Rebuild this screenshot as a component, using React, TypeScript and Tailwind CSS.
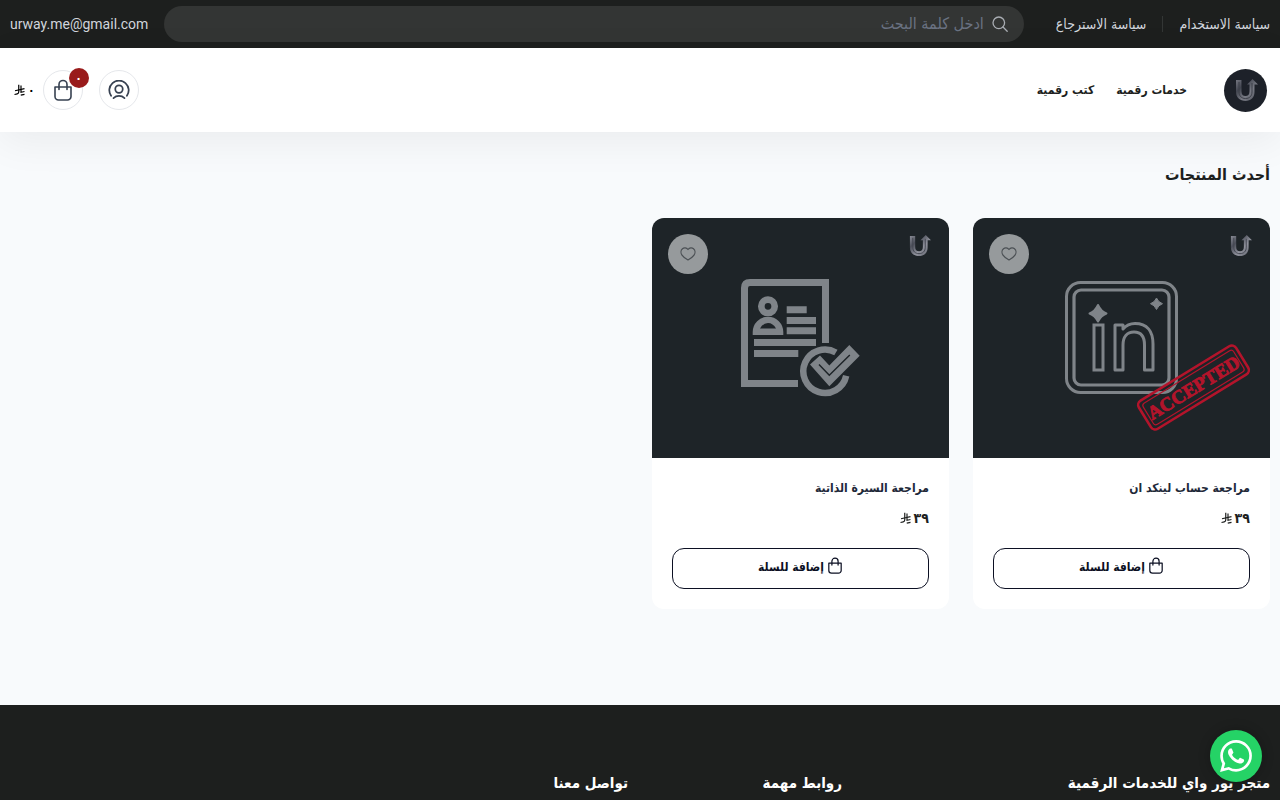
import { useState } from "react";

const menuLinks = ["خدمات رقمية", "كتب رقمية"];
const footerColumns = ["روابط مهمة", "تواصل معنا"];

const UMark = ({ className }: { className?: string }) => (
  <svg viewBox="0 0 24 24" className={className} fill="none" aria-hidden="true">
    <defs>
      <linearGradient id="umark" x1="0" y1="0" x2="1" y2="1">
        <stop offset="0" stopColor="#8f919b" />
        <stop offset="0.3" stopColor="#4c4f5a" />
        <stop offset="0.6" stopColor="#90929c" />
        <stop offset="1" stopColor="#5c5f69" />
      </linearGradient>
    </defs>
    <path
      d="M2 2h5.500v11.500c0 3 1.500 4.500 4 4.500s4-1.500 4-4.500V6.500H13L18.500 1l5.500 5.500h-3.500V14c0 5.500-3.500 9-9 9s-9.500-3.500-9.500-9z"
      fill="url(#umark)"
    />
    <path d="M5 4v10c0 4 2.500 6.500 6.500 6.500s6.500-2.500 6.500-6.500V5" stroke="#434650" strokeWidth="1" />
  </svg>
);

const Bag = ({ className }: { className?: string }) => (
  <svg viewBox="0 0 20 22" className={className} fill="none" stroke="currentColor" strokeWidth="1.600" strokeLinecap="round" aria-hidden="true">
    <path d="M2 8h16v9.500a3.500 3.500 0 0 1-3.500 3.500h-9A3.500 3.500 0 0 1 2 17.500z" strokeLinejoin="round" />
    <path d="M6 10.500V5.500a4 4 0 0 1 8 0v5" />
  </svg>
);

const Riyal = ({ className }: { className?: string }) => (
  <svg viewBox="0 0 22 24" className={className} fill="none" stroke="currentColor" strokeWidth="2.400" aria-label="ريال" role="img">
    <path d="M1 21l5.500-1.300c2-.5 3-1.700 3-3.700V1.500" />
    <path d="M14 3v13.500l7-1.500" />
    <path d="M2 13.500l19-4.300M13.500 22.300l7.500-1.700" />
  </svg>
);

const LinkedinArt = () => (
  <svg viewBox="0 0 297 240" className="h-full w-full" fill="none" stroke="#7f8489" aria-hidden="true">
    <rect x="93.500" y="64.500" width="110" height="110" rx="14" strokeWidth="3" />
    <rect x="101" y="72" width="95" height="95" rx="7" strokeWidth="3.200" />
    <rect x="121" y="107" width="9" height="45" strokeWidth="3" />
    <path
      d="M142 107h8v4c3-3.500 7-5.500 12-5.500 12 0 18 7.500 18 20.500v26h-8.500v-25c0-9-3.500-13-10.500-13s-11 5-11 13v25h-8z"
      strokeWidth="3"
      strokeLinejoin="round"
    />
    <g fill="#7f8489" stroke="#7f8489" strokeLinejoin="round">
      <path d="M125 87q3 6.500 8.500 8.500-5.500 2-8.500 8-3-6-8.500-8 5.500-2 8.500-8.500z" strokeWidth="2" />
      <path d="M183.500 80q1.800 4.300 6 5.700-4.200 1.500-6 5.800-1.800-4.300-6-5.800 4.200-1.400 6-5.700z" strokeWidth="1" />
    </g>
    <g transform="translate(220.500 169.500) rotate(-31.500)" stroke="#b3142b">
      <rect x="-57" y="-16.500" width="114" height="33" rx="5" strokeWidth="2.600" />
      <rect x="-53" y="-12.500" width="106" height="25" rx="3" strokeWidth="1.200" />
      <text x="0" y="6.500" textAnchor="middle" fill="#b3142b" strokeWidth="0.900" fontSize="19" className="font-['Liberation_Serif',serif] font-bold">
        ACCEPTED
      </text>
    </g>
  </svg>
);

const ResumeArt = () => (
  <svg viewBox="0 0 297 240" className="h-full w-full" fill="none" stroke="#7f8489" aria-hidden="true">
    <path d="M146 165.500H92.500V70q0-5.500 5.500-5.500h75.500V125" strokeWidth="7" />
    <circle cx="116" cy="88.300" r="6.700" strokeWidth="6.700" />
    <path
      d="M100.700 117v-3a15.300 15.300 0 0 1 30.600 0v3zM108 110.500h16q-3-5.500-8-5.500t-8 5.500z"
      fill="#7f8489"
      fillRule="evenodd"
      stroke="none"
    />
    <path d="M134.700 91.700h20M134.700 102.500h29.300M134.700 112.800h29.300M102 124.500h62M102 135.500h44.300" strokeWidth="7" />
    <path d="M183.900 134.500A21.700 21.700 0 1 0 194.200 157.800" strokeWidth="6.500" />
    <path d="M158 146.500l10-9 9.300 10L197.300 127l10.400 10.700-30.400 30.600z" fill="#7f8489" stroke="none" />
    <path d="M167 146.500l10.300 10.800 20.500-20.300" stroke="#1e2428" strokeWidth="1.500" />
  </svg>
);

const products = [
  { id: 1, title: "مراجعة حساب لينكد ان", price: "٣٩", art: <LinkedinArt /> },
  { id: 2, title: "مراجعة السيرة الذاتية", price: "٣٩", art: <ResumeArt /> },
];

const TopBar = () => {
  const [query, setQuery] = useState("");

  return (
    <div className="flex h-12 items-center bg-[#1d1f1e] px-2.5 text-sm text-gray-300">
      <a href="#terms">سياسة الاستخدام</a>
      <span className="mx-4 h-4 w-px bg-[#333635]" />
      <a href="#refund">سياسة الاسترجاع</a>
      <label className="mx-4 ms-8 flex h-9 flex-1 items-center gap-2 rounded-full bg-[#333534] px-4">
        <svg viewBox="0 0 16 16" className="h-4 w-4" fill="none" stroke="#a9adb3" strokeWidth="1.300" strokeLinecap="round" aria-hidden="true">
          <circle cx="6.800" cy="6.800" r="5.800" />
          <path d="M11 11l4.200 4.200" />
        </svg>
        <input
          type="search"
          aria-label="بحث"
          placeholder="ادخل كلمة البحث"
          value={query}
          onChange={(e) => setQuery(e.target.value)}
          className="min-w-0 flex-1 bg-transparent text-base placeholder:text-gray-500 focus:outline-none"
        />
      </label>
      <a href="mailto:urway.me@gmail.com" dir="ltr" className="font-[Roboto,sans-serif]">
        urway.me@gmail.com
      </a>
    </div>
  );
};

const Header = () => (
  <header className="flex h-[84px] items-center bg-white px-2.5 shadow-[0_10px_40px_rgba(0,0,0,0.06)]">
    <a href="#home" aria-label="الرئيسية" className="mx-[3px] flex h-[43px] w-[43px] items-center justify-center rounded-full bg-[#1d2129]">
      <UMark className="h-6 w-6 opacity-80" />
    </a>
    <nav className="ms-[34px] flex flex-1 gap-[22px] text-xs font-bold text-[#1d1f1e]">
      {menuLinks.map((link) => (
        <a key={link} href="#category">
          {link}
        </a>
      ))}
    </nav>
    <button aria-label="حسابي" className="flex h-10 w-10 items-center justify-center rounded-full border border-gray-200 text-[#374151]">
      <svg viewBox="0 0 20 18" className="h-5 w-[22px]" fill="none" stroke="currentColor" strokeWidth="1.600" strokeLinecap="round" aria-hidden="true">
        <path d="M2.800 14.300A8.800 8.800 0 1 1 17.200 14.300" />
        <circle cx="10" cy="8.200" r="3.400" />
        <path d="M5 16.300c1.300-1.200 3-1.900 5-1.900s3.700.7 5 1.900" />
      </svg>
    </button>
    <button aria-label="السلة" className="ms-4 flex items-center gap-2">
      <span className="relative flex h-10 w-10 items-center justify-center rounded-full border border-gray-200 text-[#374151]">
        <Bag className="h-[22px] w-5" />
        <span className="absolute -start-[7px] -top-[3px] flex h-5 w-5 items-center justify-center rounded-full bg-[#991b1b] text-xs font-bold text-white">
          ٠
        </span>
      </span>
      <span className="me-1 flex items-center gap-[3px] text-xs font-bold text-black">
        ٠ <Riyal className="h-3 w-[11px]" />
      </span>
    </button>
  </header>
);

const ProductCard = ({ product }: { product: (typeof products)[number] }) => {
  const [liked, setLiked] = useState(false);

  return (
    <article className="overflow-hidden rounded-xl bg-white">
      <div className="relative h-60 bg-[#1e2428]">
        {product.art}
        <UMark className="absolute start-[18px] top-4 h-[23px] w-[23px]" />
        <button
          aria-label="أضف إلى المفضلة"
          aria-pressed={liked}
          onClick={() => setLiked(!liked)}
          className="absolute end-4 top-4 flex h-10 w-10 items-center justify-center rounded-full bg-[#969a9c] text-[#4b5054]"
        >
          <svg viewBox="0 0 16 14" className="h-3.5 w-4" fill={liked ? "currentColor" : "none"} stroke="currentColor" strokeWidth="1.200" strokeLinejoin="round" aria-hidden="true">
            <path d="M8 2.500C6.500.5 4 .5 2.500 1.700.5 3.400.7 6.300 2 8.200 3.500 10.400 6 12 8 13c2-1 4.500-2.600 6-4.800 1.300-1.900 1.500-4.800-.5-6.500C12 .5 9.500.5 8 2.500z" />
          </svg>
        </button>
      </div>
      <div className="p-5">
        <h3 className="text-xs leading-5 font-bold text-gray-800">
          <a href="#product">{product.title}</a>
        </h3>
        <div className="mt-2.5 flex items-center gap-[3px] text-sm leading-5 font-bold text-[#1d1f1e]">
          {product.price} <Riyal className="h-3 w-[11px]" />
        </div>
        <button className="mt-5 flex h-[41px] w-full items-center justify-center gap-[3px] rounded-xl border border-[#0c1023] pb-1 text-xs font-bold text-[#0c1023]">
          <Bag className="mb-0.5 h-[17px] w-4" />
          إضافة للسلة
        </button>
      </div>
    </article>
  );
};

const App = () => {
  return (
    <div dir="rtl" lang="ar" className="flex min-h-screen flex-col bg-[#f8fafc] font-['DejaVu_Sans_Condensed','DejaVu_Sans',sans-serif]">
      <TopBar />
      <Header />

      <main className="px-2.5 pt-7 pb-24">
        <h2 className="text-base leading-[30px] font-bold text-[#1d1f1e]">أحدث المنتجات</h2>
        <div className="mt-7 grid grid-cols-2 gap-6 md:grid-cols-4">
          {products.map((product) => (
            <ProductCard key={product.id} product={product} />
          ))}
        </div>
      </main>

      <footer className="grid flex-1 grid-cols-6 gap-6 bg-[#1d1f1e] px-2.5 pt-16 text-[15px] leading-7 font-bold text-white">
        <h3 className="col-span-2">متجر يور واي للخدمات الرقمية</h3>
        {footerColumns.map((title) => (
          <h3 key={title}>{title}</h3>
        ))}
      </footer>

      <a
        href="#whatsapp"
        aria-label="واتساب"
        className="fixed start-[18px] bottom-[18px] flex h-[52px] w-[52px] items-center justify-center rounded-full bg-[#25d366] shadow-[0_0_12px_rgba(0,0,0,0.25)]"
      >
        <svg viewBox="0 0 24 24" className="h-8 w-8" fill="#fff" aria-hidden="true">
          <path d="M17.472 14.382c-.297-.149-1.758-.867-2.030-.967-.273-.099-.471-.148-.670.150-.197.297-.767.966-.940 1.164-.173.199-.347.223-.644.075-.297-.150-1.255-.463-2.390-1.475-.883-.788-1.480-1.761-1.653-2.059-.173-.297-.018-.458.130-.606.134-.133.298-.347.446-.520.149-.174.198-.298.298-.497.099-.198.050-.371-.025-.520-.075-.149-.669-1.612-.916-2.207-.242-.579-.487-.500-.669-.510-.173-.008-.371-.010-.570-.010-.198 0-.520.074-.792.372-.272.297-1.040 1.016-1.040 2.479 0 1.462 1.065 2.875 1.213 3.074.149.198 2.096 3.200 5.077 4.487.709.306 1.262.489 1.694.625.712.227 1.360.195 1.871.118.571-.085 1.758-.719 2.006-1.413.248-.694.248-1.289.173-1.413-.074-.124-.272-.198-.570-.347m-5.421 7.403h-.004a9.870 9.870 0 0 1-5.031-1.378l-.361-.214-3.741.982.998-3.648-.235-.374a9.860 9.860 0 0 1-1.510-5.260c.001-5.450 4.436-9.884 9.888-9.884 2.640 0 5.122 1.030 6.988 2.898a9.825 9.825 0 0 1 2.893 6.994c-.003 5.450-4.437 9.884-9.885 9.884m8.413-18.297A11.815 11.815 0 0 0 12.050 0C5.495 0 .160 5.335.157 11.892c0 2.096.547 4.142 1.588 5.945L.057 24l6.305-1.654a11.882 11.882 0 0 0 5.683 1.448h.005c6.554 0 11.890-5.335 11.893-11.893a11.821 11.821 0 0 0-3.480-8.413z" />
        </svg>
      </a>
    </div>
  );
};

export default App;
